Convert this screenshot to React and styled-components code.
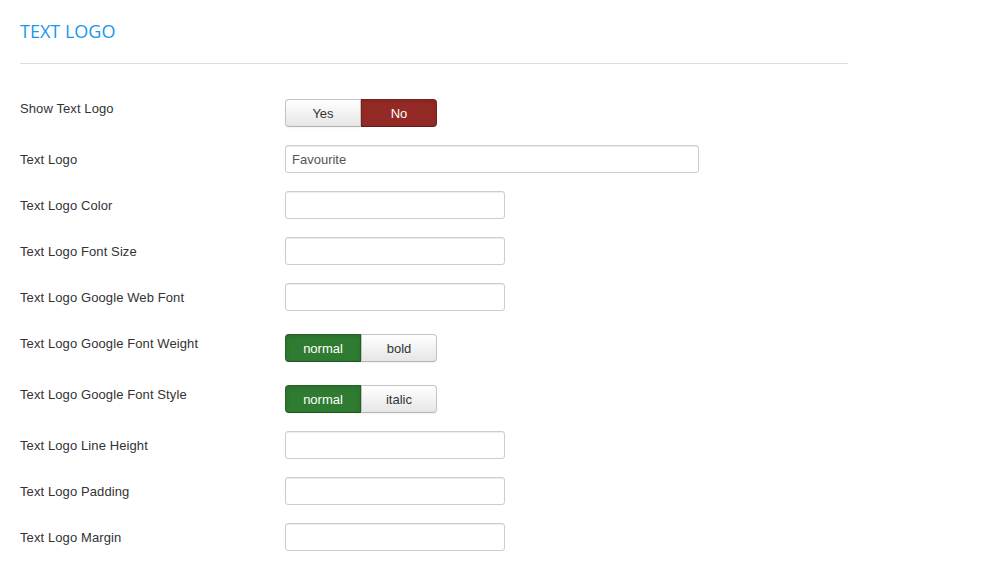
import React from "react";
import styled, { createGlobalStyle } from "styled-components";

const Global = createGlobalStyle`
  html, body { margin: 0; padding: 0; background: #fff; }
  body { font-family: "Liberation Sans", Arial, sans-serif; font-size: 13px; color: #333; }
  * { box-sizing: border-box; }
`;

const Page = styled.div`
  padding: 0 20px;
  width: 868px;
`;

const Heading = styled.h3`
  margin: 0;
  padding-top: 20px;
  height: 64px;
  font-family: "Open Sans", sans-serif;
  font-weight: 400;
  font-size: 18px;
  line-height: 22px;
  color: #1a96ee;
  border-bottom: 1px solid #ddd;
`;

const Form = styled.div`
  padding-top: 30px;
`;

const Row = styled.div`
  display: flex;
  align-items: flex-start;
  margin-bottom: 18px;
`;

const Label = styled.label`
  width: 265px;
  flex: none;
  padding-top: 6px;
  line-height: 18px;
  font-size: 13px;
  letter-spacing: 0.1px;
  color: #333;
`;

const Input = styled.input`
  height: 28px;
  width: ${(p) => (p.$wide ? "414px" : "220px")};
  padding: 4px 6px;
  font-family: "Liberation Sans", Arial, sans-serif;
  font-size: 13px;
  color: #555;
  background: #fff;
  border: 1px solid #ccc;
  border-radius: 3px;
  box-shadow: inset 0 1px 1px rgba(0, 0, 0, 0.075);
  outline: none;
`;

const Group = styled.div`
  display: flex;
  margin-top: 5px;
`;

const colors = {
  danger: "#942a25",
  success: "#2f7b31",
};

const Btn = styled.button`
  width: 76px;
  height: 28px;
  padding: 2px 0 0;
  font-family: "Liberation Sans", Arial, sans-serif;
  font-size: 13px;
  line-height: 18px;
  cursor: pointer;
  color: ${(p) => (p.$active ? "#fff" : "#333")};
  background: ${(p) =>
    p.$active ? colors[p.$active] : "linear-gradient(to bottom, #fff, #e6e6e6)"};
  border: 1px solid ${(p) => (p.$active ? "rgba(0,0,0,0.2)" : "#c4c4c4")};
  border-bottom-color: ${(p) => (p.$active ? "rgba(0,0,0,0.35)" : "#b3b3b3")};
  box-shadow: ${(p) =>
    p.$active
      ? "inset 0 2px 4px rgba(0,0,0,0.1)"
      : "inset 0 1px 0 rgba(255,255,255,0.2), 0 1px 2px rgba(0,0,0,0.05)"};
  &:first-child { border-radius: 4px 0 0 4px; }
  &:last-child { border-radius: 0 4px 4px 0; }
`;

const rows = [
  { label: "Show Text Logo", buttons: [["Yes"], ["No", "danger"]] },
  { label: "Text Logo", value: "Favourite", wide: true },
  { label: "Text Logo Color" },
  { label: "Text Logo Font Size" },
  { label: "Text Logo Google Web Font" },
  { label: "Text Logo Google Font Weight", buttons: [["normal", "success"], ["bold"]] },
  { label: "Text Logo Google Font Style", buttons: [["normal", "success"], ["italic"]] },
  { label: "Text Logo Line Height" },
  { label: "Text Logo Padding" },
  { label: "Text Logo Margin" },
];

export default function App() {
  return (
    <>
      <Global />
      <Page>
        <Heading>TEXT LOGO</Heading>
        <Form>
          {rows.map((r) => (
            <Row key={r.label}>
              <Label>{r.label}</Label>
              {r.buttons ? (
                <Group>
                  {r.buttons.map(([t, a]) => (
                    <Btn key={t} $active={a}>
                      {t}
                    </Btn>
                  ))}
                </Group>
              ) : (
                <Input $wide={r.wide} defaultValue={r.value || ""} />
              )}
            </Row>
          ))}
        </Form>
      </Page>
    </>
  );
}
